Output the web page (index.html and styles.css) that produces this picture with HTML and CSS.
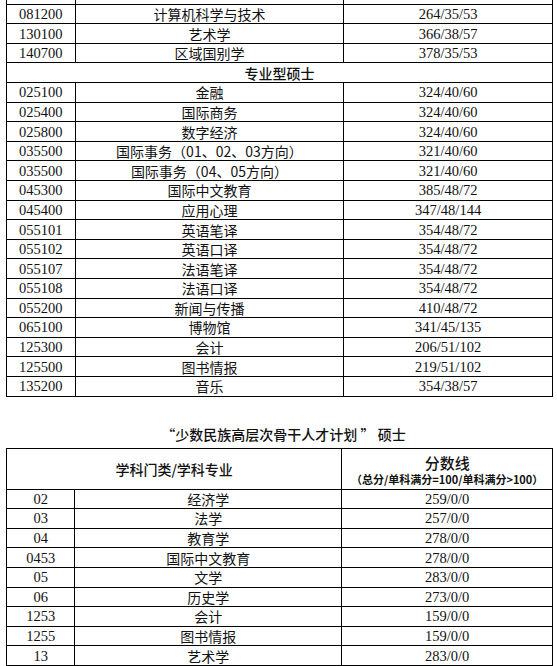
FILE: index.html
```html
<!DOCTYPE html>
<html lang="zh-CN">
<head>
<meta charset="utf-8">
<link rel="stylesheet" href="styles.css">
</head>
<body>
<div class="page">
  <table class="grid grid-top">
    <colgroup><col class="c1"><col class="c2"><col class="c3"></colgroup>
    <tr class="spacer"><td class="k"></td><td class="n"></td><td class="s"></td></tr>
    <tr><td class="k">081200</td><td class="n">计算机科学与技术</td><td class="s">264/35/53</td></tr>
    <tr><td class="k">130100</td><td class="n">艺术学</td><td class="s">366/38/57</td></tr>
    <tr><td class="k">140700</td><td class="n">区域国别学</td><td class="s">378/35/53</td></tr>
    <tr><td colspan="3" class="section">专业型硕士</td></tr>
    <tr><td class="k">025100</td><td class="n">金融</td><td class="s">324/40/60</td></tr>
    <tr><td class="k">025400</td><td class="n">国际商务</td><td class="s">324/40/60</td></tr>
    <tr><td class="k">025800</td><td class="n">数字经济</td><td class="s">324/40/60</td></tr>
    <tr><td class="k">035500</td><td class="n">国际事务（01、02、03方向）</td><td class="s">321/40/60</td></tr>
    <tr><td class="k">035500</td><td class="n">国际事务（04、05方向）</td><td class="s">321/40/60</td></tr>
    <tr><td class="k">045300</td><td class="n">国际中文教育</td><td class="s">385/48/72</td></tr>
    <tr><td class="k">045400</td><td class="n">应用心理</td><td class="s">347/48/144</td></tr>
    <tr><td class="k">055101</td><td class="n">英语笔译</td><td class="s">354/48/72</td></tr>
    <tr><td class="k">055102</td><td class="n">英语口译</td><td class="s">354/48/72</td></tr>
    <tr><td class="k">055107</td><td class="n">法语笔译</td><td class="s">354/48/72</td></tr>
    <tr><td class="k">055108</td><td class="n">法语口译</td><td class="s">354/48/72</td></tr>
    <tr><td class="k">055200</td><td class="n">新闻与传播</td><td class="s">410/48/72</td></tr>
    <tr><td class="k">065100</td><td class="n">博物馆</td><td class="s">341/45/135</td></tr>
    <tr><td class="k">125300</td><td class="n">会计</td><td class="s">206/51/102</td></tr>
    <tr><td class="k">125500</td><td class="n">图书情报</td><td class="s">219/51/102</td></tr>
    <tr><td class="k">135200</td><td class="n">音乐</td><td class="s">354/38/57</td></tr>
  </table>

  <div class="title">“少数民族高层次骨干人才计划 ” 硕士</div>

  <table class="grid grid-bottom">
    <colgroup><col class="c1"><col class="c2"><col class="c3"></colgroup>
    <tr class="head">
      <td colspan="2" class="head-left">学科门类/学科专业</td>
      <td class="head-right s"><div class="head-main">分数线</div><div class="head-sub">（总分/单科满分=100/单科满分&gt;100）</div></td>
    </tr>
    <tr><td class="k">02</td><td class="n">经济学</td><td class="s">259/0/0</td></tr>
    <tr><td class="k">03</td><td class="n">法学</td><td class="s">257/0/0</td></tr>
    <tr><td class="k">04</td><td class="n">教育学</td><td class="s">278/0/0</td></tr>
    <tr><td class="k">0453</td><td class="n">国际中文教育</td><td class="s">278/0/0</td></tr>
    <tr><td class="k">05</td><td class="n">文学</td><td class="s">283/0/0</td></tr>
    <tr><td class="k">06</td><td class="n">历史学</td><td class="s">273/0/0</td></tr>
    <tr><td class="k">1253</td><td class="n">会计</td><td class="s">159/0/0</td></tr>
    <tr><td class="k">1255</td><td class="n">图书情报</td><td class="s">159/0/0</td></tr>
    <tr><td class="k">13</td><td class="n">艺术学</td><td class="s">283/0/0</td></tr>
  </table>
</div>
</body>
</html>
```

FILE: styles.css
```css
html, body {
  margin: 0;
  padding: 0;
  background: #fff;
}

body {
  font-family: "Liberation Serif", "Noto Sans CJK SC", serif;
  font-size: 14.5px;
  color: #111;
}

.page {
  padding-left: 6px;
  width: 547px;
}

.grid {
  width: 547px;
  border-collapse: collapse;
}

.c1 { width: 68px; }
.c2 { width: 269px; }
.c3 { width: 210px; }

.grid td {
  border: 1px solid #000;
  padding: 0;
  text-align: center;
  vertical-align: middle;
  height: 18.6px;
  line-height: 18px;
  white-space: nowrap;
}

.grid td.k { width: 68px; }
.grid td.n { width: 269px; }
.grid td.s { width: 210px; }

.grid .spacer td {
  border-top: none;
  height: 3.7px;
  line-height: 0;
  font-size: 0;
}

.n {
  font-family: "Noto Sans CJK SC", sans-serif;
  font-size: 14px;
}

.section {
  font-family: "Noto Sans CJK SC", sans-serif;
  font-size: 14px;
  font-weight: 500;
}

.title {
  font-family: "Noto Sans CJK SC", sans-serif;
  font-size: 14px;
  font-weight: 500;
  text-align: center;
  line-height: 20px;
  margin-top: 27px;
  margin-bottom: 4px;
  padding-left: 8px;
}

.grid .head td {
  height: 40px;
  font-family: "Noto Sans CJK SC", sans-serif;
}

.head-left {
  font-size: 14px;
  font-weight: 500;
}

.head-main {
  font-size: 15px;
  font-weight: 500;
  line-height: 17px;
  padding-top: 3px;
}

.head-sub {
  font-size: 11px;
  font-weight: 700;
  line-height: 16px;
}
```
